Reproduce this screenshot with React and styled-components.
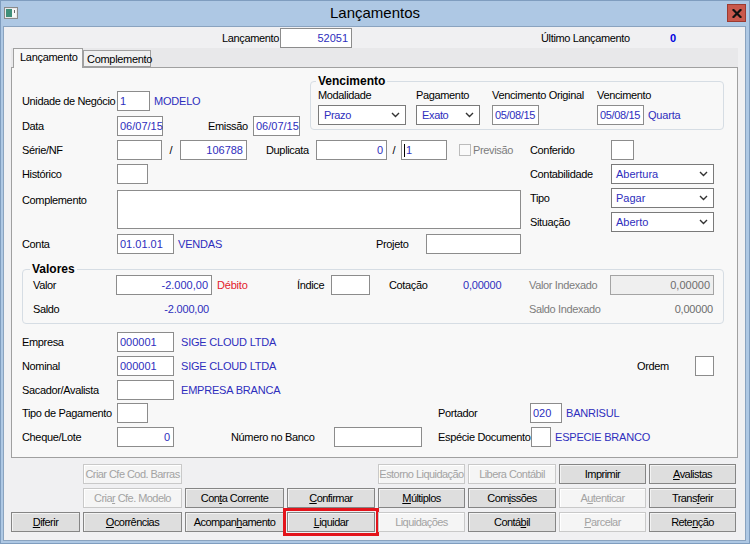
import React from "react"
import styled, { createGlobalStyle } from "styled-components"

const GlobalStyle = createGlobalStyle`
  html, body {
    margin: 0;
    padding: 0;
    background: #ffffff;
  }
  body {
    font-family: "Liberation Sans", Arial, sans-serif;
    font-size: 11px;
    color: #000;
  }
  * { box-sizing: border-box; }
`

const BLUE = "#2e2ebd"

const Window = styled.div`
  width: 750px;
  height: 544px;
  background: #aec8e4;
  border: 1px solid #7f9dbf;
  display: flex;
  flex-direction: column;
  overflow: hidden;
`

const TitleBar = styled.div`
  height: 25px;
  position: relative;
  display: flex;
  align-items: center;
  justify-content: center;
  flex-shrink: 0;
`

const TitleText = styled.div`
  font-size: 15px;
  color: #000;
  margin-top: -2px;
`

const TitleIcon = styled.div`
  position: absolute;
  left: 3px;
  top: 6px;
`

const CloseBtn = styled.div`
  position: absolute;
  right: 3px;
  top: 3px;
  width: 19px;
  height: 18px;
  background: #c9584c;
  border: 1px solid #9c3a30;
  display: flex;
  align-items: center;
  justify-content: center;
`

const Body = styled.div`
  flex: 1;
  margin: 0 3px 2px 2px;
  background: #f0f0f2;
  border: 1px solid #8aa3bf;
  padding: 1px 0 0 7px;
  display: flex;
  flex-direction: column;
`

const TopBar = styled.div`
  display: flex;
  align-items: center;
  height: 20px;
  padding-left: 211px;
`

const Label = styled.span`
  width: ${(p) => p.$w || 95}px;
  margin-left: ${(p) => p.$ml || 0}px;
  color: ${(p) => (p.$gray ? "#7d7d7d" : "#000")};
  letter-spacing: -0.35px;
  white-space: nowrap;
  flex-shrink: 0;
  align-self: ${(p) => (p.$top ? "flex-start" : "center")};
  padding-top: ${(p) => (p.$top ? 4 : 0)}px;
`

const Text = styled.span`
  color: ${(p) => p.$color || BLUE};
  margin-left: ${(p) => p.$ml || 0}px;
  width: ${(p) => (p.$w ? `${p.$w}px` : "auto")};
  text-align: ${(p) => p.$align || "left"};
  font-weight: ${(p) => (p.$bold ? "bold" : "normal")};
  letter-spacing: -0.2px;
  white-space: nowrap;
  flex-shrink: 0;
`

const Input = styled.div`
  width: ${(p) => p.$w}px;
  height: ${(p) => p.$h || 20}px;
  margin-left: ${(p) => p.$ml || 0}px;
  background: ${(p) => (p.$disabled ? "#efefef" : "#fff")};
  border: 1px solid ${(p) => (p.$disabled ? "#a4a4a4" : "#8c8c8c")};
  color: ${(p) => (p.$disabled ? "#6d6d6d" : BLUE)};
  display: flex;
  align-items: ${(p) => (p.$h ? "flex-start" : "center")};
  justify-content: ${(p) => (p.$right ? "flex-end" : "flex-start")};
  padding: 0 3px 0 2px;
  flex-shrink: 0;
  white-space: nowrap;
`

const Caret = styled.span`
  display: inline-block;
  width: 1px;
  height: 13px;
  background: #000;
  margin-right: 1px;
`

const SelectBox = styled.div`
  width: ${(p) => p.$w}px;
  height: 20px;
  background: #fff;
  border: 1px solid #7a7a7a;
  color: ${BLUE};
  display: flex;
  align-items: center;
  justify-content: space-between;
  padding: 0 5px 0 ${(p) => p.$pl || 4}px;
  flex-shrink: 0;
`

const Select = ({ w, pl, children }) => (
  <SelectBox $w={w} $pl={pl}>
    <span>{children}</span>
    <svg width="9" height="6" viewBox="0 0 9 6">
      <polyline points="1,1 4.5,4.5 8,1" fill="none" stroke="#333" strokeWidth="1.4" />
    </svg>
  </SelectBox>
)

const Slash = styled.span`
  width: ${(p) => p.$w}px;
  text-align: center;
  flex-shrink: 0;
`

const CheckBox = styled.span`
  width: 12px;
  height: 12px;
  margin-left: ${(p) => p.$ml || 0}px;
  border: 1px solid #bcbcbc;
  background: #fafafa;
  flex-shrink: 0;
`

const TabStrip = styled.div`
  height: 19px;
  margin-right: 7px;
  background: #e8e8ea;
  display: flex;
  align-items: flex-end;
  padding-left: 2px;
  position: relative;
  z-index: 1;
`

const Tab = styled.div`
  height: ${(p) => (p.$active ? 20 : 17)}px;
  margin-bottom: ${(p) => (p.$active ? -1 : 0)}px;
  padding: ${(p) => (p.$active ? "2px 6px 0 6px" : "2px 3px 0 3px")};
  border: 1px solid #a0a0a0;
  border-bottom: ${(p) => (p.$active ? "none" : "1px solid #a0a0a0")};
  background: ${(p) => (p.$active ? "#f8f8f8" : "#f0f0f0")};
  width: ${(p) => p.$w}px;
  letter-spacing: -0.3px;
  white-space: nowrap;
`

const Panel = styled.div`
  height: 391px;
  margin-right: 7px;
  border: 1px solid #a0a0a0;
  background: #f8f8f8;
  padding: 7px 13px 0 10px;
  display: flex;
  flex-direction: column;
`

const Section = styled.div`
  display: flex;
  align-items: flex-start;
  margin-top: ${(p) => p.$mt || 0}px;
`

const Column = styled.div`
  width: ${(p) => (p.$w ? `${p.$w}px` : "auto")};
  display: flex;
  flex-direction: column;
  gap: ${(p) => p.$gap || 0}px;
  padding-top: ${(p) => p.$pt || 0}px;
  flex-shrink: 0;
`

const Row = styled.div`
  display: flex;
  align-items: center;
  min-height: 20px;
  margin-top: ${(p) => p.$mt || 0}px;
`

const Group = styled.div`
  position: relative;
  width: ${(p) => p.$w}px;
  margin-top: ${(p) => p.$mt || 0}px;
  border: 1px solid #d6dde4;
  border-radius: 4px;
  padding: ${(p) => p.$pad};
`

const GroupTitle = styled.span`
  position: absolute;
  top: -8px;
  left: ${(p) => p.$left}px;
  padding: 0 2px;
  background: #f8f8f8;
  font-weight: bold;
  font-size: 12px;
  line-height: 14px;
`

const VencGrid = styled.div`
  display: grid;
  grid-template-columns: 98px 76px 105px auto;
  grid-template-rows: 14px 20px;
  row-gap: 3px;
  align-items: center;
  letter-spacing: -0.35px;
`

const Spacer = styled.div`
  flex: ${(p) => (p.$w ? `0 0 ${p.$w}px` : "1")};
`

const ButtonGrid = styled.div`
  display: grid;
  grid-template-columns: 69px 99px 99px 88px 87px 88px 87px 87px;
  grid-auto-rows: 20px;
  column-gap: 3px;
  row-gap: 4px;
  margin-top: 6px;
`

const BtnFrame = styled.div`
  grid-column: ${(p) => p.$col};
  grid-row: ${(p) => p.$row};
  display: flex;
  align-items: center;
  justify-content: center;
  font-size: 11px;
  letter-spacing: -0.55px;
  white-space: nowrap;
  overflow: hidden;
  color: ${(p) => (p.$off ? "#a3a3a3" : "#000")};
  background: ${(p) => (p.$off ? "#f5f5f5" : "#dedede")};
  border: 1px solid ${(p) => (p.$off ? "#c9c9c9" : "#858585")};
  box-shadow: inset 1px 1px 0 ${(p) => (p.$off ? "#fff" : "#f3f3f3")};
  outline: ${(p) => (p.$hl ? "3px solid #e3141b" : "none")};
  outline-offset: 1px;
`

const Btn = ({ children, ...rest }) => (
  <BtnFrame {...rest}>
    <span>{children}</span>
  </BtnFrame>
)

const WindowIcon = () => (
  <svg width="14" height="12" viewBox="0 0 14 12">
    <rect x="0.5" y="0.5" width="13" height="11" fill="#e9e9e9" stroke="#8a8a8a" />
    <rect x="2" y="2" width="6" height="8" fill="#3f8f7a" />
    <rect x="8" y="2" width="4" height="8" fill="#f7f7f7" />
    <rect x="10" y="3" width="1" height="3" fill="#6a6a6a" />
  </svg>
)

const CloseIcon = () => (
  <svg width="10" height="9" viewBox="0 0 10 9">
    <path d="M1.5 1 L8.5 8 M8.5 1 L1.5 8" stroke="#111" strokeWidth="2.2" strokeLinecap="square" />
  </svg>
)

export default function App() {
  return (
    <>
      <GlobalStyle />
      <Window>
        <TitleBar>
          <TitleIcon>
            <WindowIcon />
          </TitleIcon>
          <TitleText>Lançamentos</TitleText>
          <CloseBtn>
            <CloseIcon />
          </CloseBtn>
        </TitleBar>
        <Body>
          <TopBar>
            <Label $w={58}>Lançamento</Label>
            <Input $w={72} $right>52051</Input>
            <Label $w={129} $ml={189}>Último Lançamento</Label>
            <Text $color="#0000e0" $bold>0</Text>
          </TopBar>

          <TabStrip>
            <Tab $active $w={70}>Lançamento</Tab>
            <Tab $w={68}>Complemento</Tab>
          </TabStrip>

          <Panel>
            <Section>
              <Column $w={288} $pt={16} $gap={5}>
                <Row>
                  <Label>Unidade de Negócio</Label>
                  <Input $w={33}>1</Input>
                  <Text $ml={4}>MODELO</Text>
                </Row>
                <Row>
                  <Label>Data</Label>
                  <Input $w={46}>06/07/15</Input>
                  <Label $w={45} $ml={45}>Emissão</Label>
                  <Input $w={47}>06/07/15</Input>
                </Row>
              </Column>
              <Group $w={414} $mt={6} $pad="6px 6px 4px 7px">
                <GroupTitle $left={5}>Vencimento</GroupTitle>
                <VencGrid>
                  <span>Modalidade</span>
                  <span>Pagamento</span>
                  <span>Vencimento Original</span>
                  <span>Vencimento</span>
                  <Select w={88} pl={5}>Prazo</Select>
                  <Select w={64} pl={5}>Exato</Select>
                  <Input $w={47}>05/08/15</Input>
                  <Row>
                    <Input $w={47}>05/08/15</Input>
                    <Text $ml={4}>Quarta</Text>
                  </Row>
                </VencGrid>
              </Group>
            </Section>

            <Section $mt={4}>
              <Column $w={508}>
                <Row>
                  <Label>Série/NF</Label>
                  <Input $w={45} />
                  <Slash $w={18}>/</Slash>
                  <Input $w={67} $right>106788</Input>
                  <Label $w={50} $ml={19}>Duplicata</Label>
                  <Input $w={71} $right>0</Input>
                  <Slash $w={14}>/</Slash>
                  <Input $w={46}>
                    <Caret />1
                  </Input>
                  <CheckBox $ml={12} />
                  <Label $gray $ml={2} $w={50}>Previsão</Label>
                </Row>
                <Row $mt={4}>
                  <Label>Histórico</Label>
                  <Input $w={31} />
                </Row>
                <Row $mt={6}>
                  <Label $top>Complemento</Label>
                  <Input $w={404} $h={39} />
                </Row>
                <Row $mt={5}>
                  <Label>Conta</Label>
                  <Input $w={57}>01.01.01</Input>
                  <Text $ml={4} $w={198}>VENDAS</Text>
                  <Label $w={50}>Projeto</Label>
                  <Input $w={95} />
                </Row>
              </Column>
              <Column $gap={4}>
                <Row>
                  <Label $w={81}>Conferido</Label>
                  <Input $w={23} />
                </Row>
                <Row>
                  <Label $w={81}>Contabilidade</Label>
                  <Select w={103}>Abertura</Select>
                </Row>
                <Row>
                  <Label $w={81}>Tipo</Label>
                  <Select w={103}>Pagar</Select>
                </Row>
                <Row>
                  <Label $w={81}>Situação</Label>
                  <Select w={103}>Aberto</Select>
                </Row>
              </Column>
            </Section>

            <Group $w={702} $mt={15} $pad="5px 0 4px 10px">
              <GroupTitle $left={7}>Valores</GroupTitle>
              <Row>
                <Label $w={83}>Valor</Label>
                <Input $w={96} $right>-2.000,00</Input>
                <Text $color="#e3202a" $ml={5} $w={80}>Débito</Text>
                <Label $w={34}>Índice</Label>
                <Input $w={39} />
                <Label $w={74} $ml={19}>Cotação</Label>
                <Text $w={66}>0,00000</Text>
                <Label $gray $w={81}>Valor Indexado</Label>
                <Input $w={104} $right $disabled>0,00000</Input>
              </Row>
              <Row $mt={4}>
                <Label $w={83}>Saldo</Label>
                <Text $w={93} $align="right">-2.000,00</Text>
                <Label $gray $w={81} $ml={320}>Saldo Indexado</Label>
                <Text $color="#6d6d6d" $w={103} $align="right">0,00000</Text>
              </Row>
            </Group>

            <Row $mt={8}>
              <Label>Empresa</Label>
              <Input $w={57}>000001</Input>
              <Text $ml={7}>SIGE CLOUD LTDA</Text>
            </Row>
            <Row $mt={4}>
              <Label>Nominal</Label>
              <Input $w={57}>000001</Input>
              <Text $ml={7}>SIGE CLOUD LTDA</Text>
              <Spacer />
              <Label $w={58}>Ordem</Label>
              <Input $w={19} />
              <Spacer $w={10} />
            </Row>
            <Row $mt={4}>
              <Label>Sacador/Avalista</Label>
              <Input $w={57} />
              <Text $ml={7}>EMPRESA BRANCA</Text>
            </Row>
            <Row $mt={3}>
              <Label>Tipo de Pagamento</Label>
              <Input $w={31} />
              <Label $w={92} $ml={290}>Portador</Label>
              <Input $w={32}>020</Input>
              <Text $ml={4}>BANRISUL</Text>
            </Row>
            <Row $mt={4}>
              <Label>Cheque/Lote</Label>
              <Input $w={57} $right>0</Input>
              <Label $w={103} $ml={57}>Número no Banco</Label>
              <Input $w={88} />
              <Label $w={93} $ml={16}>Espécie Documento</Label>
              <Input $w={20} />
              <Text $ml={4}>ESPECIE BRANCO</Text>
            </Row>
          </Panel>

          <ButtonGrid>
            <Btn $col={2} $row={1} $off>Criar Cfe Cod. Barras</Btn>
            <Btn $col={5} $row={1} $off>Estorno Liquidação</Btn>
            <Btn $col={6} $row={1} $off>Libera Contábil</Btn>
            <Btn $col={7} $row={1}>Imprimir</Btn>
            <Btn $col={8} $row={1}><u>A</u>valistas</Btn>

            <Btn $col={2} $row={2} $off>Cria<u>r</u> Cfe. Modelo</Btn>
            <Btn $col={3} $row={2}>Con<u>t</u>a Corrente</Btn>
            <Btn $col={4} $row={2}><u>C</u>onfirmar</Btn>
            <Btn $col={5} $row={2}><u>M</u>últiplos</Btn>
            <Btn $col={6} $row={2}>Com<u>i</u>ssões</Btn>
            <Btn $col={7} $row={2} $off>A<u>u</u>tenticar</Btn>
            <Btn $col={8} $row={2}>Trans<u>f</u>erir</Btn>

            <Btn $col={1} $row={3}><u>D</u>iferir</Btn>
            <Btn $col={2} $row={3}><u>O</u>corrências</Btn>
            <Btn $col={3} $row={3}>Acompan<u>h</u>amento</Btn>
            <Btn $col={4} $row={3} $hl><u>L</u>iquidar</Btn>
            <Btn $col={5} $row={3} $off>Liquidações</Btn>
            <Btn $col={6} $row={3}>Contá<u>b</u>il</Btn>
            <Btn $col={7} $row={3} $off><u>P</u>arcelar</Btn>
            <Btn $col={8} $row={3}>Rete<u>n</u>ção</Btn>
          </ButtonGrid>
        </Body>
      </Window>
    </>
  )
}
